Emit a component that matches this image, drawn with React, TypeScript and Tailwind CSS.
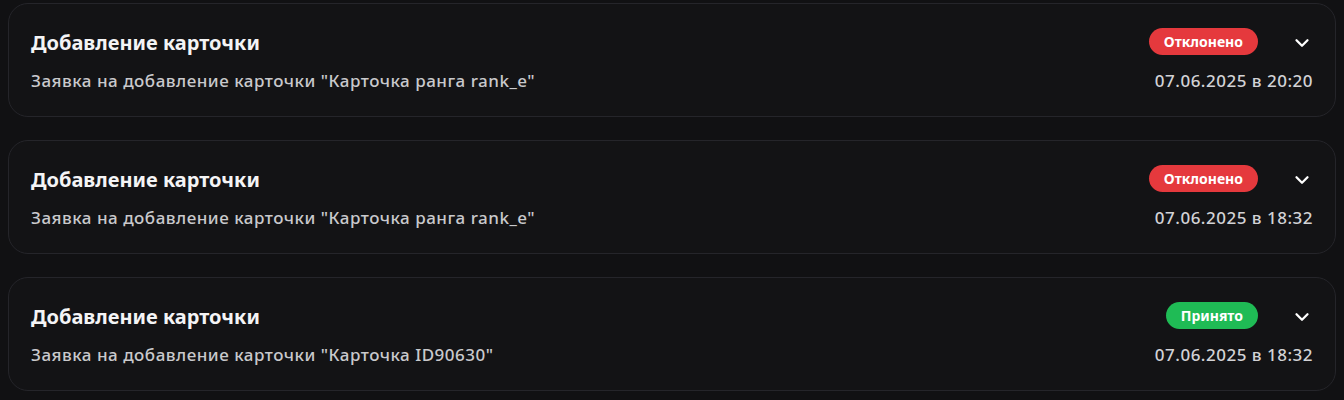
import { ChevronDown } from "lucide-react";

type Request = {
  title: string;
  description: string;
  status: "rejected" | "accepted";
  date: string;
};

const requests: Request[] = [
  {
    title: "Добавление карточки",
    description: 'Заявка на добавление карточки "Карточка ранга rank_e"',
    status: "rejected",
    date: "07.06.2025 в 20:20",
  },
  {
    title: "Добавление карточки",
    description: 'Заявка на добавление карточки "Карточка ранга rank_e"',
    status: "rejected",
    date: "07.06.2025 в 18:32",
  },
  {
    title: "Добавление карточки",
    description: 'Заявка на добавление карточки "Карточка ID90630"',
    status: "accepted",
    date: "07.06.2025 в 18:32",
  },
];

function StatusBadge({ status }: { status: Request["status"] }) {
  if (status === "rejected") {
    return (
      <span className="inline-flex h-[27px] items-center rounded-full bg-[#e5393d] px-[15px] text-[14px] font-bold text-white">
        Отклонено
      </span>
    );
  }
  return (
    <span className="inline-flex h-[27px] items-center rounded-full bg-[#1fbb55] px-[15px] text-[14px] font-bold text-white">
      Принято
    </span>
  );
}

function RequestCard({ item }: { item: Request }) {
  return (
    <div className="flex h-[114px] items-start justify-between rounded-[20px] border border-[#25252a] bg-[#131315] pl-[22px] pr-[22px] pt-[24px]">
      <div className="flex flex-col">
        <div className="text-[20px] font-bold leading-[30px] text-[#f4f4f5]">{item.title}</div>
        <div className="mt-[10px] text-[17px] font-medium leading-[26px] tracking-[0.5px] text-[#c9c9cc]">
          {item.description}
        </div>
      </div>
      <div className="flex flex-col items-end">
        <div className="flex h-[27px] items-center gap-[33px]">
          <StatusBadge status={item.status} />
          <ChevronDown className="h-[22px] w-[22px] translate-y-[1px] text-white" strokeWidth={2.5} />
        </div>
        <div className="mt-[13px] text-[17px] font-medium leading-[26px] tracking-[0.5px] text-[#d2d2d5]">
          {item.date}
        </div>
      </div>
    </div>
  );
}

export default function App() {
  return (
    <div
      className="min-h-[400px] w-full bg-[#111113] px-[8px] pt-[3px]"
      style={{ fontFamily: '"Noto Sans", "Open Sans", sans-serif' }}
    >
      <div className="flex flex-col gap-[23px]">
        {requests.map((item, i) => (
          <RequestCard key={i} item={item} />
        ))}
      </div>
    </div>
  );
}
